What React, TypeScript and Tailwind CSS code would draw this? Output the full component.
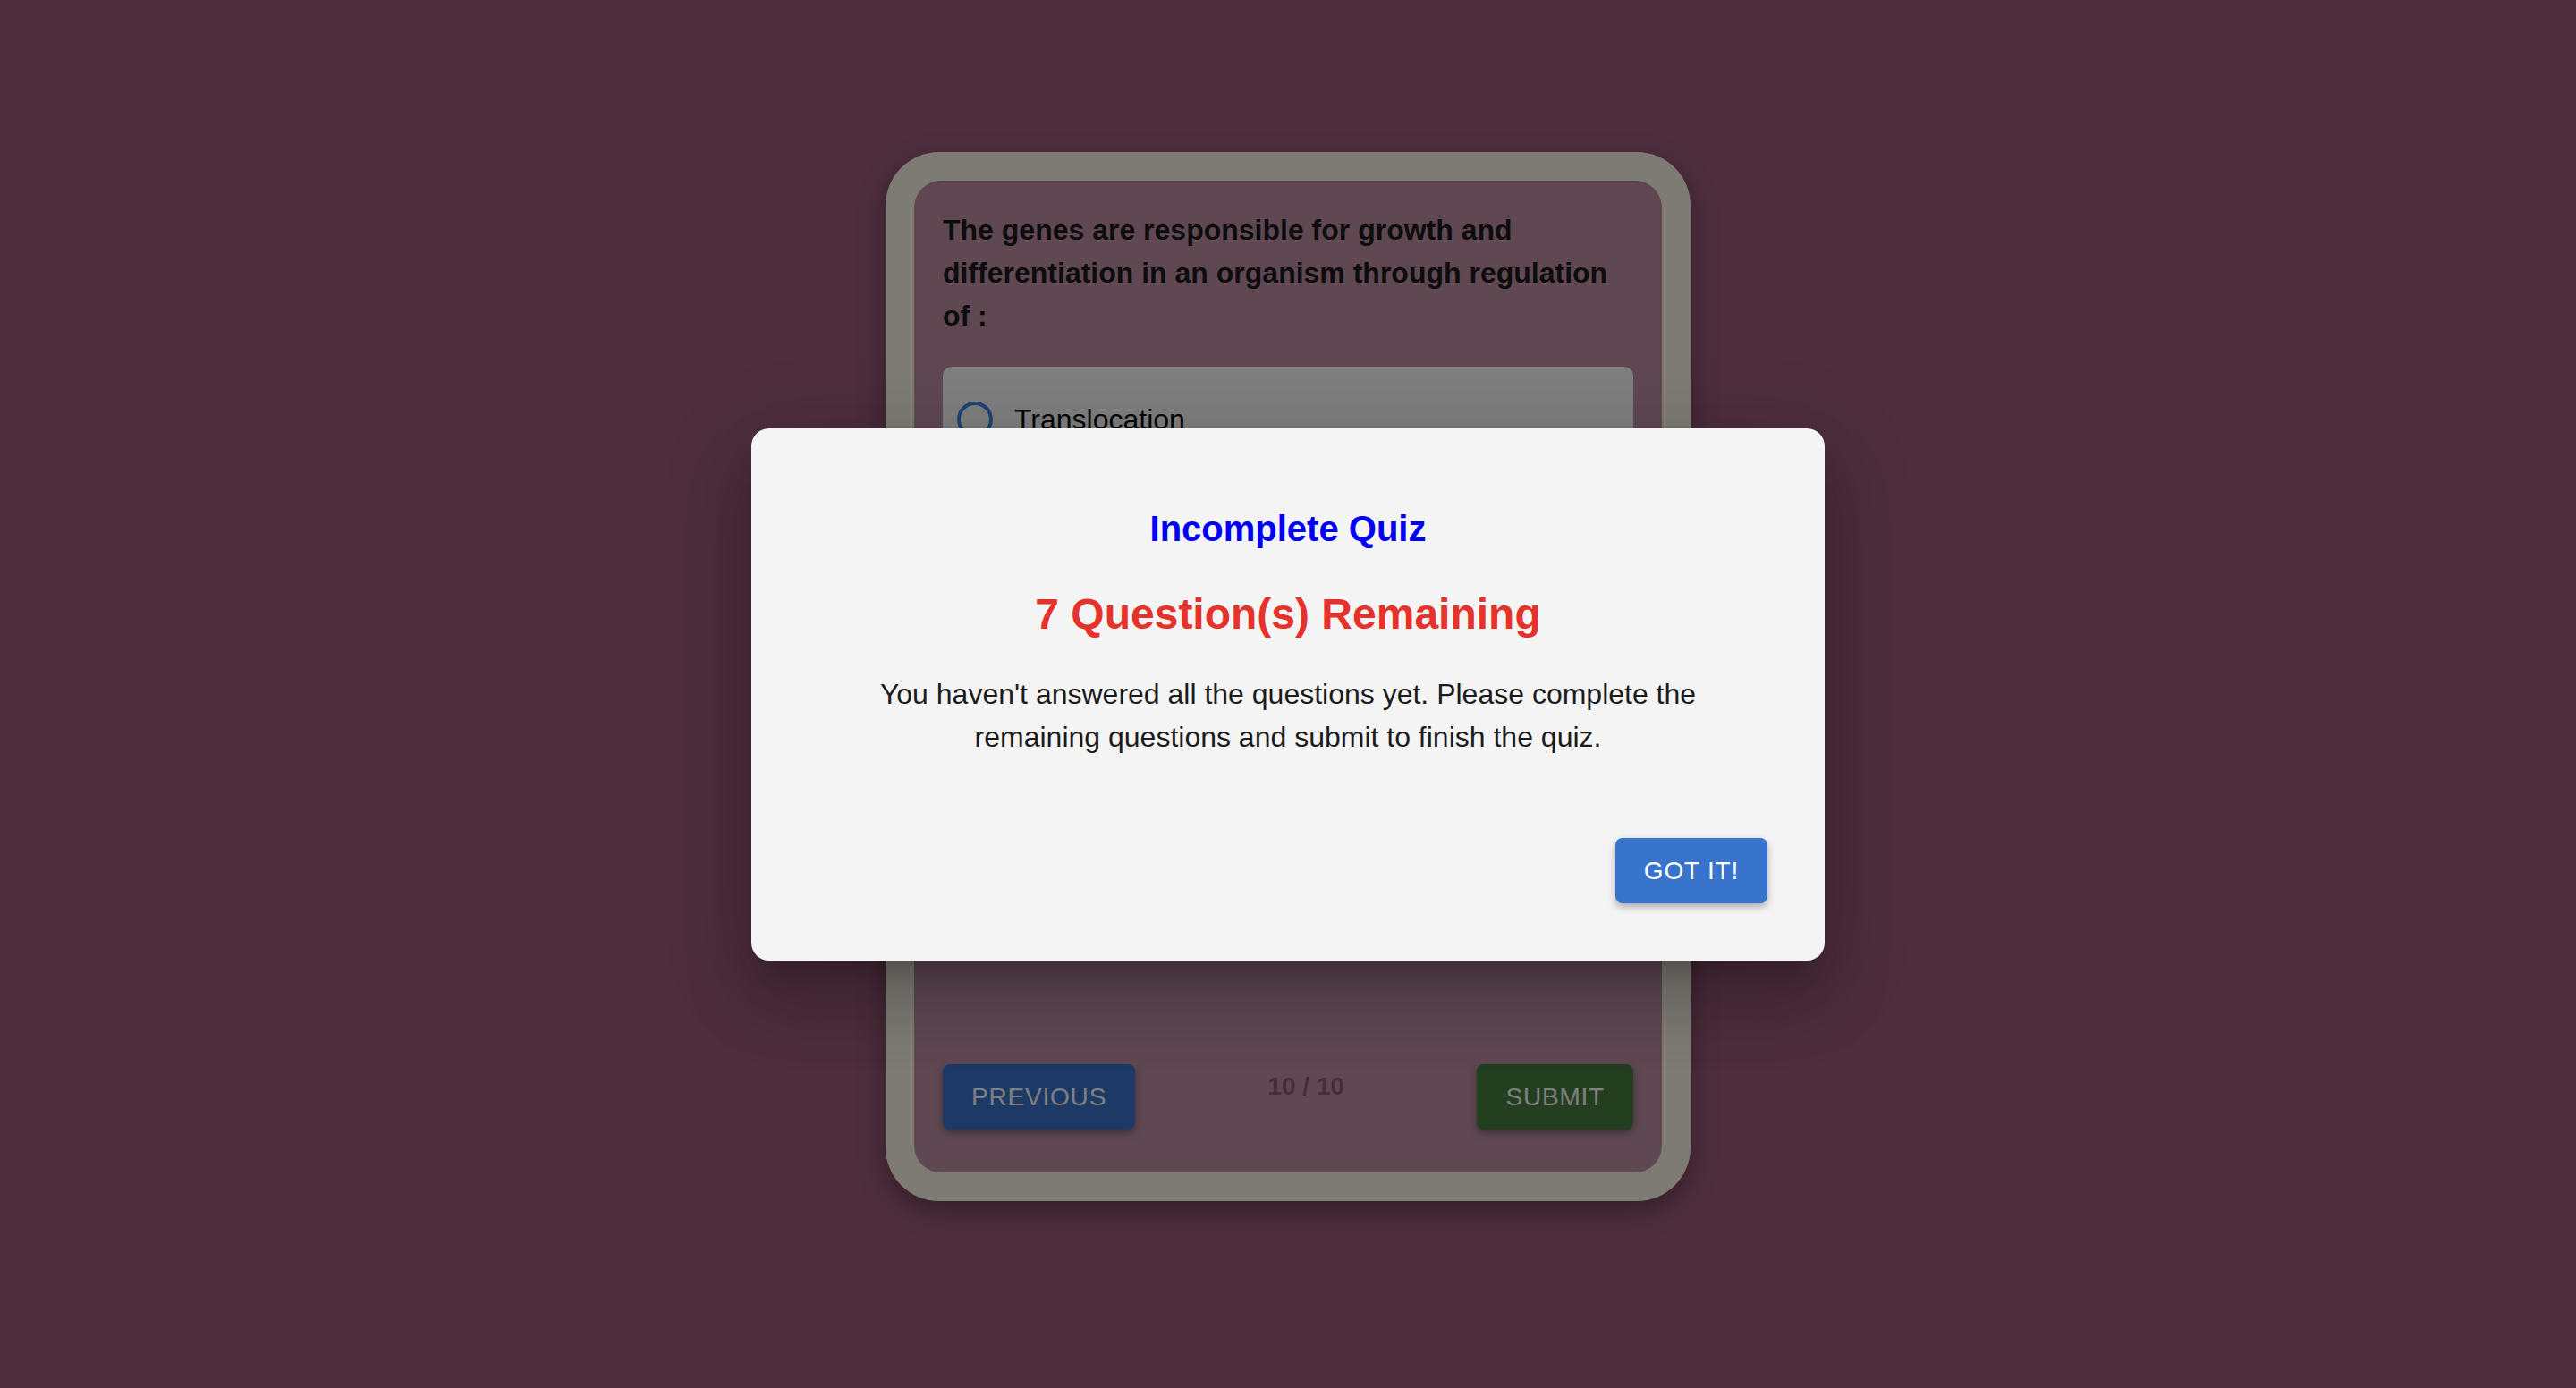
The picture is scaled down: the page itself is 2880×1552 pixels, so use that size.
const options = [
  "Translocation",
  "Transformation",
  "Transduction and translation",
  "Translation and transcription",
];

function QuizCard() {
  return (
    <div className="w-[900px] h-[1173px] rounded-[60px] bg-[#fdf7ea] p-[32px] shadow-[0_10px_30px_rgba(0,0,0,0.35)]">
      <div className="h-full rounded-[30px] bg-[#be90a4] px-[32px] pt-[31px] pb-[48px] flex flex-col">
        <p className="text-[32px] leading-[48px] font-bold text-[#1a1a1a]">
          The genes are responsible for growth and differentiation in an organism through regulation of :
        </p>

        <div className="mt-[33px] flex flex-col gap-[24px]">
          {options.map((opt) => (
            <label key={opt} className="bg-white rounded-[10px] pl-[16px] py-[35px] flex items-center gap-[24px]">
              <span className="w-[40px] h-[40px] rounded-full border-[4px] border-[#3e8ae6] shrink-0" />
              <span className="text-[32px] leading-[48px] text-[#111]">{opt}</span>
            </label>
          ))}
        </div>

        <div className="mt-auto flex items-start justify-between">
          <button className="bg-[#3874cb] text-white text-[28px] leading-[49px] tracking-[0.8px] px-[32px] py-[12px] rounded-[8px] shadow-[0_4px_8px_rgba(0,0,0,0.35)]">
            PREVIOUS
          </button>
          <span className="text-[28px] leading-[49px] font-bold text-[#935677]">10 / 10</span>
          <button className="bg-[#467e3e] text-white text-[28px] leading-[49px] tracking-[0.8px] px-[32px] py-[12px] rounded-[8px] shadow-[0_4px_8px_rgba(0,0,0,0.35)]">
            SUBMIT
          </button>
        </div>
      </div>
    </div>
  );
}

function IncompleteDialog() {
  return (
    <div className="absolute inset-0 bg-black/50 flex items-center justify-center">
      <div className="w-[1200px] bg-[#f4f4f4] rounded-[20px] pt-[80px] pb-[64px] px-[64px] flex flex-col items-center shadow-[0_22px_30px_-14px_rgba(0,0,0,0.2),0_48px_76px_6px_rgba(0,0,0,0.14),0_18px_92px_16px_rgba(0,0,0,0.12)]">
        <h2 className="text-[40px] leading-[64px] font-bold text-[#0000f5]">Incomplete Quiz</h2>
        <h3 className="mt-[35px] text-[48px] leading-[58px] font-bold text-[#e5322a]">7 Question(s) Remaining</h3>
        <p className="mt-[36px] max-w-[1000px] text-center text-[32px] leading-[48px] text-[#1c1c1c]">
          You haven't answered all the questions yet. Please complete the remaining questions and submit to finish the quiz.
        </p>
        <div className="self-stretch flex justify-end mt-[89px]">
          <button className="bg-[#3874cb] text-white text-[28px] leading-[49px] tracking-[0.8px] px-[32px] py-[12px] rounded-[8px] shadow-[0_4px_8px_rgba(0,0,0,0.3)]">
            GOT IT!
          </button>
        </div>
      </div>
    </div>
  );
}

export default function App() {
  return (
    <div className="relative h-[1552px] bg-[#9c5c7a] flex justify-center pt-[170px] font-['Liberation_Sans',Arial,sans-serif]">
      <QuizCard />
      <IncompleteDialog />
    </div>
  );
}
